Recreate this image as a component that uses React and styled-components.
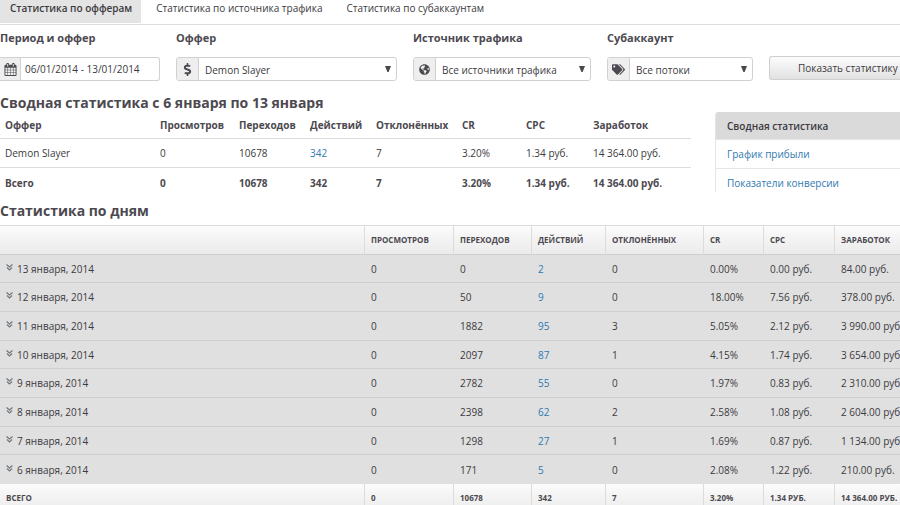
import { useState } from "react";
import styled, { createGlobalStyle } from "styled-components";
import { FaDollarSign, FaGlobeAmericas, FaTags } from "react-icons/fa";

const summary = [
    { offer: "Demon Slayer", views: "0", clicks: "10678", actions: "342", declined: "7", cr: "3.20%", cpc: "1.34 руб.", income: "14 364.00 руб." },
];

const total = { views: "0", clicks: "10678", actions: "342", declined: "7", cr: "3.20%", cpc: "1.34 руб.", income: "14 364.00 руб." };

const days = [
    { date: "13 января, 2014", views: "0", clicks: "0", actions: "2", declined: "0", cr: "0.00%", cpc: "0.00 руб.", income: "84.00 руб." },
    { date: "12 января, 2014", views: "0", clicks: "50", actions: "9", declined: "0", cr: "18.00%", cpc: "7.56 руб.", income: "378.00 руб." },
    { date: "11 января, 2014", views: "0", clicks: "1882", actions: "95", declined: "3", cr: "5.05%", cpc: "2.12 руб.", income: "3 990.00 руб." },
    { date: "10 января, 2014", views: "0", clicks: "2097", actions: "87", declined: "1", cr: "4.15%", cpc: "1.74 руб.", income: "3 654.00 руб." },
    { date: "9 января, 2014", views: "0", clicks: "2782", actions: "55", declined: "0", cr: "1.97%", cpc: "0.83 руб.", income: "2 310.00 руб." },
    { date: "8 января, 2014", views: "0", clicks: "2398", actions: "62", declined: "2", cr: "2.58%", cpc: "1.08 руб.", income: "2 604.00 руб." },
    { date: "7 января, 2014", views: "0", clicks: "1298", actions: "27", declined: "1", cr: "1.69%", cpc: "0.87 руб.", income: "1 134.00 руб." },
    { date: "6 января, 2014", views: "0", clicks: "171", actions: "5", declined: "0", cr: "2.08%", cpc: "1.22 руб.", income: "210.00 руб." },
];

const tabs = ["Статистика по офферам", "Статистика по источника трафика", "Статистика по субаккаунтам"];
const reports = ["Сводная статистика", "График прибыли", "Показатели конверсии"];
const columns = ["Просмотров", "Переходов", "Действий", "Отклонённых", "CR", "CPC", "Заработок"];
const summaryWidths = [155, 79, 71, 66, 86, 64, 67, 103];
const dayWidths = [365, 89, 78, 74, 98, 60, 71, 65];

function CalendarIcon() {
    return (
        <svg viewBox="0 0 1792 1792" width="13" height="13" fill="currentColor" aria-hidden="true">
            <path d="M192 1664h288v-288h-288v288zm352 0h320v-288h-320v288zm-352-352h288v-320h-288v320zm352 0h320v-320h-320v320zm-352-384h288v-288h-288v288zm736 736h320v-288h-320v288zm-384-736h320v-288h-320v288zm768 736h288v-288h-288v288zm-384-352h320v-320h-320v320zm-352-864v-288q0-13-9.5-22.5t-22.5-9.5h-64q-13 0-22.5 9.5t-9.5 22.5v288q0 13 9.5 22.5t22.5 9.5h64q13 0 22.5-9.5t9.5-22.5zm736 864h288v-320h-288v320zm-384-384h320v-288h-320v288zm384 0h288v-288h-288v288zm32-480v-288q0-13-9.5-22.5t-22.5-9.5h-64q-13 0-22.5 9.5t-9.5 22.5v288q0 13 9.5 22.5t22.5 9.5h64q13 0 22.5-9.5t9.5-22.5zm384-64v1280q0 52-38 90t-90 38h-1408q-52 0-90-38t-38-90v-1280q0-52 38-90t90-38h128v-96q0-66 47-113t113-47h64q66 0 113 47t47 113v96h384v-96q0-66 47-113t113-47h64q66 0 113 47t47 113v96h128q52 0 90 38t38 90z" />
        </svg>
    );
}

function Arrow() {
    return (
        <svg viewBox="0 0 6 6" width="6" height="6" fill="#4a474d" aria-hidden="true">
            <path d="M0 0h6L3.6 6H2.4z" />
        </svg>
    );
}

function ExpandIcon() {
    return (
        <svg viewBox="0 0 7 7" width="7" height="7" fill="none" stroke="#6f767c" strokeWidth="1.2" aria-hidden="true">
            <path d="M0.5 0.5l3 2.5 3-2.5M1 3.5l2.5 2.5 2.5-2.5" />
        </svg>
    );
}

function SelectField({ id, label, icon, options }) {
    return (
        <Field>
            <Label htmlFor={id}>{label}</Label>
            <Group>
                <Addon>{icon}</Addon>
                <Select id={id}>
                    {options.map((option) => <option key={option}>{option}</option>)}
                </Select>
                <Arrow />
            </Group>
        </Field>
    );
}

function Columns({ widths }) {
    return (
        <colgroup>
            {widths.map((width, i) => <col key={i} style={{ width }} />)}
        </colgroup>
    );
}

function Cells({ row, link }) {
    return (
        <>
            <td>{row.views}</td>
            <td>{row.clicks}</td>
            <td>{link ? <Link href="#actions">{row.actions}</Link> : row.actions}</td>
            <td>{row.declined}</td>
            <td>{row.cr}</td>
            <td>{row.cpc}</td>
            <td>{row.income}</td>
        </>
    );
}

function App() {
    const [tab, setTab] = useState(0);
    const [period, setPeriod] = useState("06/01/2014 - 13/01/2014");

    return (
        <Page>
            <GlobalStyle />
            <Tabs>
                {tabs.map((name, i) => (
                    <Tab key={name} $active={tab === i} onClick={() => setTab(i)}>{name}</Tab>
                ))}
            </Tabs>
            <Filters onSubmit={(e) => e.preventDefault()}>
                <Field>
                    <Label htmlFor="period">Период и оффер</Label>
                    <Group $first>
                        <Addon $first><CalendarIcon /></Addon>
                        <Input id="period" value={period} onChange={(e) => setPeriod(e.target.value)} />
                    </Group>
                </Field>
                <SelectField id="offer" label="Оффер" icon={<FaDollarSign size={13} />} options={["Demon Slayer"]} />
                <SelectField id="source" label="Источник трафика" icon={<FaGlobeAmericas size={11} />} options={["Все источники трафика"]} />
                <SelectField id="sub" label="Субаккаунт" icon={<FaTags size={13} />} options={["Все потоки"]} />
                <Submit>Показать статистику</Submit>
            </Filters>
            <Overview>
                <section>
                    <Title>Сводная статистика с 6 января по 13 января</Title>
                    <SummaryTable>
                        <Columns widths={summaryWidths} />
                        <thead>
                            <tr>
                                <th>Оффер</th>
                                {columns.map((name) => <th key={name}>{name}</th>)}
                            </tr>
                        </thead>
                        <tbody>
                            {summary.map((row) => (
                                <tr key={row.offer}>
                                    <td>{row.offer}</td>
                                    <Cells row={row} link />
                                </tr>
                            ))}
                        </tbody>
                        <tfoot>
                            <tr>
                                <td>Всего</td>
                                <Cells row={total} />
                            </tr>
                        </tfoot>
                    </SummaryTable>
                </section>
                <Reports>
                    {reports.map((name, i) => <Report key={name} href="#report" $active={i === 0}>{name}</Report>)}
                </Reports>
            </Overview>
            <Title>Статистика по дням</Title>
            <DaysTable>
                <Columns widths={dayWidths} />
                <thead>
                    <tr>
                        <th aria-label="Дата"></th>
                        {columns.map((name) => <th key={name}>{name}</th>)}
                    </tr>
                </thead>
                <tbody>
                    {days.map((row) => (
                        <tr key={row.date}>
                            <td><Day><ExpandIcon />{row.date}</Day></td>
                            <Cells row={row} link />
                        </tr>
                    ))}
                </tbody>
                <tfoot>
                    <tr>
                        <td>Всего</td>
                        <Cells row={total} />
                    </tr>
                </tfoot>
            </DaysTable>
        </Page>
    );
}

const GlobalStyle = createGlobalStyle`
    * {
        box-sizing: border-box;
    }
    body {
        margin: 0;
        overflow: hidden;
        background: #fff;
        color: #3c3a40;
        font: 10px/16px "Open Sans", sans-serif;
    }
    button, input, select {
        font: inherit;
        color: inherit;
    }
`;

const Page = styled.main`
    overflow: hidden;
`;

const Tabs = styled.nav`
    display: flex;
    height: 25px;
    border-bottom: 1px solid #dedede;
`;

const Tab = styled.button`
    height: 23px;
    padding: 0 9px 7px 10px;
    margin-right: 5px;
    border: 0;
    background: ${(props) => (props.$active ? "#e4e4e4" : "none")};
    font-weight: ${(props) => (props.$active ? 600 : 400)};
    white-space: nowrap;
`;

const Filters = styled.form`
    display: grid;
    grid-template-columns: 160fr 221fr 178fr 146fr 131fr;
    column-gap: 16px;
    align-items: end;
    padding-top: 4px;
`;

const Field = styled.div`
    min-width: 0;
`;

const Label = styled.label`
    display: block;
    margin-bottom: 10px;
    color: #4c4950;
    font-size: 11px;
    line-height: 18px;
    font-weight: 700;
    white-space: nowrap;
`;

const Group = styled.div`
    display: flex;
    align-items: center;
    height: 24px;
    border: 1px solid #d2d0d0;
    border-left-width: ${(props) => (props.$first ? 0 : "1px")};
    border-radius: ${(props) => (props.$first ? "0 3px 3px 0" : "3px")};
    overflow: hidden;

    > svg {
        flex: none;
        margin-right: 5px;
        pointer-events: none;
    }
`;

const Addon = styled.span`
    display: flex;
    align-items: center;
    justify-content: center;
    flex: none;
    width: ${(props) => (props.$first ? "21px" : "22px")};
    height: 100%;
    border-right: 1px solid #d2d0d0;
    background: #eee;
    color: #4c4950;
`;

const Input = styled.input`
    flex: 1;
    min-width: 0;
    padding: 0 4px;
    border: 0;
    outline: 0;
`;

const Select = styled.select`
    flex: 1;
    min-width: 0;
    padding: 2px 6px 0;
    border: 0;
    outline: 0;
    background: none;
    appearance: none;
`;

const Submit = styled.button`
    min-width: 0;
    height: 24px;
    margin-bottom: 1px;
    padding: 0 0 0 28px;
    border: 1px solid #cfcfcf;
    border-width: 1px 0 1px 1px;
    border-radius: 3px 0 0 3px;
    background: linear-gradient(#fcfcfc, #e2e2e2);
    text-align: left;
    white-space: nowrap;
`;

const Overview = styled.div`
    display: grid;
    grid-template-columns: 691fr 185fr;
    column-gap: 24px;
    padding: 10px 0 2px;
`;

const Title = styled.h2`
    margin: 0;
    color: #4c4950;
    font-size: 14px;
    line-height: 24px;
    font-weight: 700;
    white-space: nowrap;
`;

const Table = styled.table`
    width: 100%;
    table-layout: fixed;
    border-collapse: separate;
    border-spacing: 0;

    th, td {
        text-align: left;
        white-space: nowrap;
    }
`;

const SummaryTable = styled(Table)`
    th, td {
        height: 29px;
        padding: 0 0 0 5px;
        border-bottom: 1px solid #dcdcdc;
    }
    th {
        height: 24px;
        padding-bottom: 3px;
        color: #4c4950;
        font-weight: 700;
    }
    tfoot td {
        height: 29px;
        color: #4c4950;
        font-weight: 700;
        border: 0;
    }
`;

const DaysTable = styled(Table)`
    margin-top: 2px;

    th, td {
        height: 29px;
        padding: 0 0 0 6px;
    }
    tr:nth-child(3n + 1) td {
        height: 28px;
    }
    td {
        background: #e0e0e0;
        border-bottom: 1px solid #d0cdca;
    }
    tbody tr:last-child td {
        border: 0;
    }
    th, tfoot td {
        border-right: 1px solid #dcdcdc;
        background: linear-gradient(#fcfcfc, #f4f4f4 40%, #ebebeb);
        color: #4c4950;
        font-size: 8px;
        font-weight: 700;
        text-transform: uppercase;
    }
    th:last-child, tfoot td:last-child {
        border-right: 0;
    }
    thead th {
        height: 30px;
        border-top: 1px solid #dcdcdc;
        border-bottom: 1px solid #d0cdca;
    }
    tfoot td {
        border-bottom: 0;
    }
`;

const Day = styled.div`
    display: flex;
    gap: 4px;

    svg {
        margin-top: 3px;
    }
`;

const Link = styled.a`
    color: #3079b0;
    text-decoration: none;
`;

const Reports = styled.nav`
    height: 80px;
    margin-top: 21px;
    border: 1px solid #e6e6e6;
    border-width: 0 0 0 1px;
    border-radius: 3px 0 0 0;
    overflow: hidden;
`;

const Report = styled(Link)`
    display: block;
    height: ${(props) => (props.$active ? "28px" : "29px")};
    padding: 6px 11px;
    border-bottom: 1px solid #e6e6e6;
    background: ${(props) => (props.$active ? "#dadada" : "#fff")};
    color: ${(props) => (props.$active ? "#3c3a40" : "#3079b0")};
    font-weight: ${(props) => (props.$active ? 600 : 400)};
    white-space: nowrap;
`;

export default App;
